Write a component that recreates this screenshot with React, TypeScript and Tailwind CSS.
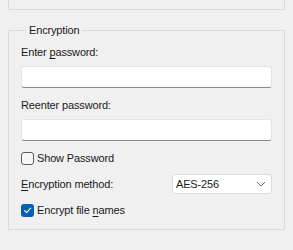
import React, { useState } from 'react';

const Check = ({ checked, onChange }: { checked: boolean; onChange: () => void }) => (
    <button
        type="button"
        onClick={onChange}
        className={
            checked
                ? 'flex h-[13px] w-[13px] items-center justify-center rounded-[3px] bg-[#005fb8]'
                : 'flex h-[13px] w-[13px] items-center justify-center rounded-[3px] border border-[#5c5c5c] bg-[#f7f7f7]'
        }
    >
        {checked && (
            <svg width="9" height="9" viewBox="0 0 9 9" fill="none">
                <path d="M1.5 4.6 L3.6 6.6 L7.6 2.2" stroke="white" strokeWidth="1.2" strokeLinecap="round" strokeLinejoin="round" />
            </svg>
        )}
    </button>
);

const App = () => {
    const [showPassword, setShowPassword] = useState(false);
    const [encryptNames, setEncryptNames] = useState(true);
    const [password, setPassword] = useState('');
    const [password2, setPassword2] = useState('');

    const inputClass =
        'block h-[22px] w-full rounded-[3px] border border-[#e3e3e3] border-b-[#8a8a8a] bg-white px-1 text-[12px] text-[#1a1a1a] outline-none';

    return (
        <div
            className="h-[250px] w-[293px] bg-[#f0f0f0] text-[11px] leading-[16px] tracking-[-0.15px] text-[#1a1a1a]"
            style={{ fontFamily: '"Liberation Sans", Arial, sans-serif' }}
        >
            {/* tail of the group box above */}
            <div className="mx-[8px] h-[10px] border-x border-b border-[#dadada]" />

            <fieldset className="mx-[8px] mt-[12px] border border-[#dadada] px-[12px] pb-[11px]">
                <legend className="ml-[5px] px-[3px] leading-[16px]">Encryption</legend>

                <div className="mt-[6px]">
                    Enter <span className="underline underline-offset-2">p</span>assword:
                </div>
                <input
                    type={showPassword ? 'text' : 'password'}
                    value={password}
                    onChange={e => setPassword(e.target.value)}
                    className={`mt-[6px] ${inputClass}`}
                />

                <div className="mt-[9px]">Reenter password:</div>
                <input
                    type={showPassword ? 'text' : 'password'}
                    value={password2}
                    onChange={e => setPassword2(e.target.value)}
                    className={`mt-[6px] ${inputClass}`}
                />

                <label className="mt-[9px] flex h-[16px] items-center gap-[3px]">
                    <Check checked={showPassword} onChange={() => setShowPassword(p => !p)} />
                    <span>Show Password</span>
                </label>

                <div className="mt-[8px] flex h-[20px] items-center justify-between">
                    <span>
                        <span className="underline underline-offset-2">E</span>ncryption method:
                    </span>
                    <div className="flex h-[20px] w-[100px] items-center justify-between rounded-[3px] border border-[#dcdcdc] bg-white pl-[3px] pr-[5px]">
                        <span>AES-256</span>
                        <svg width="10" height="6" viewBox="0 0 10 6" fill="none">
                            <path d="M1 1 L5 5 L9 1" stroke="#6b6b6b" strokeWidth="1" />
                        </svg>
                    </div>
                </div>

                <label className="mt-[8px] flex h-[16px] items-center gap-[3px]">
                    <Check checked={encryptNames} onChange={() => setEncryptNames(p => !p)} />
                    <span>
                        Encrypt file <span className="underline underline-offset-2">n</span>ames
                    </span>
                </label>
            </fieldset>
        </div>
    );
};

export default App;
